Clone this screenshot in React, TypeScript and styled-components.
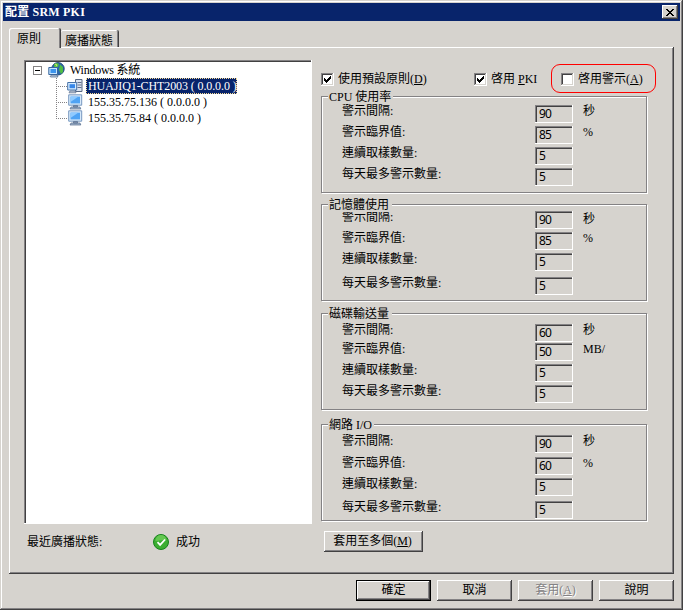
import React from "react";
import styled, { createGlobalStyle, css } from "styled-components";

const FACE = "#d6d3ce";

const Global = createGlobalStyle`
  * { box-sizing: border-box; }
  body { margin: 0; background: ${FACE}; }
`;

const raised = css`
  box-shadow: inset -1px -1px #424142, inset 1px 1px #fff, inset -2px -2px #848284;
`;
const sunken = css`
  box-shadow: inset -1px -1px #fff, inset 1px 1px #848284, inset 2px 2px #424142;
`;

const Dialog = styled.main`
  width: 683px;
  height: 610px;
  padding: 3px 2px 2px 3px;
  display: flex;
  flex-direction: column;
  background: ${FACE};
  color: #000;
  font: 12px/12px "Liberation Serif", "Noto Sans CJK TC", serif;
  white-space: nowrap;
  overflow: hidden;
  box-shadow: inset -1px -1px #424142, inset 1px 1px ${FACE}, inset -2px -2px #848284, inset 2px 2px #fff;
`;

const TitleBar = styled.header`
  display: flex;
  align-items: center;
  justify-content: space-between;
  width: 677px;
  height: 18px;
  padding: 0 2px;
  background: #08246b;
  color: #fff;
  font-weight: bold;
`;

const CloseButton = styled.button`
  width: 16px;
  height: 14px;
  padding: 0;
  border: 0;
  display: grid;
  place-items: center;
  background: ${FACE};
  ${raised}
`;

const Text = styled.span<{ $spacing?: number; $w?: number }>`
  letter-spacing: ${(p) => p.$spacing ?? 0}px;
  ${(p) => p.$w && `width: ${p.$w}px;`}
`;

const TabStrip = styled.nav`
  display: flex;
  align-items: flex-end;
  height: 19px;
  margin: 7px 0 0 6px;
`;

const Tab = styled.div<{ $active?: boolean; $w: number }>`
  width: ${(p) => p.$w}px;
  height: ${(p) => (p.$active ? 20 : 17)}px;
  margin-bottom: ${(p) => (p.$active ? -1 : 0)}px;
  padding: ${(p) => (p.$active ? "5px 0 0 8px" : "5px 0 0 4px")};
  border-radius: 2px 2px 0 0;
  background: ${FACE};
  position: relative;
  z-index: ${(p) => (p.$active ? 1 : 0)};
  box-shadow: inset -1px 0 #424142, inset ${(p) => (p.$active ? 1 : 0)}px 1px #fff, inset -2px 0 #848284;
`;

const Panel = styled.section`
  display: grid;
  grid-template-columns: 288px 327px;
  column-gap: 9px;
  width: 665px;
  height: 527px;
  margin-left: 6px;
  padding: 13px 0 0 15px;
  align-content: start;
  ${raised}
`;

const Column = styled.div`
  display: flex;
  flex-direction: column;
`;

const Tree = styled.div`
  height: 464px;
  padding: 2px;
  background: #fff;
  ${sunken}
`;

const TreeRow = styled.div<{ $child?: boolean }>`
  display: flex;
  align-items: center;
  height: 16px;
  padding-left: ${(p) => (p.$child ? 30 : 7)}px;
`;

const NodeLabel = styled.span<{ $selected?: boolean; $spacing?: number }>`
  height: 16px;
  line-height: 16px;
  padding: 0 2px;
  margin-left: 3px;
  letter-spacing: ${(p) => p.$spacing ?? 0}px;
  ${(p) =>
    p.$selected &&
    css`
      width: 151px;
      color: #fff;
      background: #08246b;
      outline: 1px dotted #f7db94;
      outline-offset: -1px;
    `}
`;

const Status = styled.div`
  display: flex;
  align-items: center;
  height: 16px;
  margin: 10px 0 0 3px;
`;

const StatusValue = styled.span`
  margin-left: 7px;
`;

const Options = styled.div`
  display: flex;
  align-items: center;
  height: 29px;
  margin-top: 4px;
`;

const Check = styled.label<{ $w?: number; $ringed?: boolean }>`
  flex: none;
  display: flex;
  align-items: center;
  gap: 4px;
  width: ${(p) => p.$w}px;
  height: 29px;
  ${(p) =>
    p.$ringed &&
    css`
      padding-left: 9px;
      border: 1px solid #f00;
      border-radius: 9px;
    `}
`;

const Box = styled.span`
  flex: none;
  display: grid;
  place-items: center;
  width: 13px;
  height: 13px;
  margin-top: 2px;
  background: #fff;
  box-shadow: inset -1px -1px #fff, inset 1px 1px #848284, inset -2px -2px ${FACE}, inset 2px 2px #424142;
`;

const Group = styled.section<{ $gap: number }>`
  width: 326px;
  height: 97px;
  margin: ${(p) => p.$gap}px 0 1px;
  padding-left: 8px;
  border: 1px solid #848284;
  box-shadow: 1px 1px #fff, inset 1px 1px #fff;
`;

const Legend = styled.h2<{ $w: number }>`
  position: relative;
  z-index: 1;
  width: ${(p) => p.$w}px;
  height: 13px;
  margin: -6px 0 0 -2px;
  padding-left: 1px;
  background: ${FACE};
  font: inherit;
  line-height: 13px;
`;

const Row = styled.div<{ $gap: number }>`
  display: grid;
  grid-template-columns: 193px 38px 40px;
  height: 18px;
  margin: ${(p) => p.$gap}px 0 0 12px;
`;

const Field = styled.span`
  height: 18px;
  padding: 3px 0 0 4px;
  font: 12px/12px "Noto Sans", sans-serif;
  letter-spacing: -0.9px;
  ${sunken}
`;

const Unit = styled.span<{ $drop?: number }>`
  padding: ${(p) => p.$drop ?? 0}px 0 0 10px;
`;

const Button = styled.button<{ $w: number; $primary?: boolean; $disabled?: boolean }>`
  width: ${(p) => p.$w}px;
  height: 21px;
  padding: 0 0 1px;
  border: 0;
  background: ${FACE};
  color: ${(p) => (p.$disabled ? "#848284" : "#000")};
  text-shadow: ${(p) => (p.$disabled ? "1px 1px #fff" : "none")};
  font: inherit;
  ${raised}
  ${(p) =>
    p.$primary &&
    css`
      box-shadow: inset 0 0 0 1px #000, inset -2px -2px #424142, inset 2px 2px #fff, inset -3px -3px #848284;
    `}
`;

const ApplyMany = styled(Button)`
  margin: 9px 0 0 3px;
  padding-right: 2px;
`;

const Footer = styled.footer`
  display: flex;
  justify-content: flex-end;
  gap: 6px;
  margin: 6px 7px 0 0;
`;

const Tick = () => (
  <svg width="7" height="7" viewBox="0 0 7 7" shapeRendering="crispEdges">
    <path d="M0 2h1v1h1v1h1v-1h1v-1h1v-1h1v-1h1v3h-1v1h-1v1h-1v1h-1v1h-1v-1h-1v-1h-1z" />
  </svg>
);

const Expander = () => (
  <svg width="15" height="16" shapeRendering="crispEdges">
    <path d="M.5 4.5h8v8h-8z" fill="#fff" stroke="#848284" />
    <path d="M2 8.5h5" stroke="#000" />
  </svg>
);

const Branch = ({ last }: { last?: boolean }) => (
  <svg width="11" height="16" shapeRendering="crispEdges">
    <path d={`M.5 0v${last ? 8 : 16}M0 8.5h11`} fill="none" stroke="#848284" strokeDasharray="1 1" />
  </svg>
);

const Globe = () => (
  <svg width="17" height="16" viewBox="0 0 17 16">
    <circle cx="10" cy="6.8" r="6.2" fill="#2a67ad" stroke="#1f4b78" />
    <path d="M6 2l3-1 2 1-1 3-4 1zM12 2.500l3 2.500v5l-2 2-2-4z" fill="#4fbd45" />
    <path d="M7 2l2 1-1 1.500" fill="none" stroke="#d7ec6b" />
    <path d="M.8 5.500h8.700v7H.8z" fill="#c4e4ff" stroke="#36659f" />
    <path d="M2.500 7h5.500v4H2.500z" fill="#3c94ec" />
    <path d="M2 14.500l1.500-1.500h5.500l1 2H3z" fill="#c3cfdf" stroke="#405b82" strokeWidth=".7" />
  </svg>
);

const Host = () => (
  <svg width="16" height="16" viewBox="0 0 16 16">
    <path d="M8.500 1.500h6.500v12H8.500z" fill="#dbe3ef" stroke="#596984" />
    <path d="M10.500 4.500h4M10.500 7h4M10.500 9.500h4" stroke="#62708b" />
    <path d="M.7 4.500h9v7.500h-9z" fill="#d4ebff" stroke="#4772a8" />
    <path d="M2.500 6.200h5.500v4H2.500z" fill="#3686e8" />
    <path d="M3 13h5l1 1.800H2z" fill="#c3cfdf" stroke="#566987" strokeWidth=".7" />
  </svg>
);

const Monitor = () => (
  <svg width="16" height="16" viewBox="0 0 16 16">
    <path d="M1.700 .8h13v10.400h-13z" fill="#d7e9fa" stroke="#7898bf" />
    <path d="M3.500 2.600h9.500v6.800H3.500z" fill="#4fa3f4" />
    <path d="M3.500 2.600h8l-8 5.400z" fill="#8fcaff" />
    <path d="M6.500 11.500h4v1.500h-4zM4 13h9l.8 2H3z" fill="#a6b8ce" stroke="#52688a" strokeWidth=".7" />
  </svg>
);

const Success = () => (
  <svg width="16" height="16" viewBox="0 0 16 16">
    <circle cx="8" cy="8" r="7.500" fill="#3cae32" stroke="#16831b" />
    <path d="M2.500 7a5.500 5.500 0 0 1 11-1q-5 0-11 1z" fill="#65c852" />
    <path d="M4.500 8.200l2.600 2.700 5-5.400" fill="none" stroke="#fff" strokeWidth="1.800" />
  </svg>
);

const LABELS = ["警示間隔:", "警示臨界值:", "連續取樣數量:", "每天最多警示數量:"];

type GroupData = {
  title: string;
  width: number;
  gap: number;
  values: string[];
  gaps: number[];
  units: string[];
  unitDrop?: number;
};

const GROUPS: GroupData[] = [
  { title: "CPU 使用率", width: 65, gap: 3, values: ["90", "85", "5", "5"], gaps: [1, 3, 3, 3], units: ["秒", "%"] },
  { title: "記憶體使用", width: 64, gap: 10, values: ["90", "85", "5", "5"], gaps: [-1, 3, 3, 6], units: ["秒", "%"], unitDrop: 2 },
  { title: "磁碟輸送量", width: 64, gap: 11, values: ["60", "50", "5", "5"], gaps: [3, 1, 3, 3], units: ["秒", "MB/"] },
  { title: "網路 I/O", width: 46, gap: 13, values: ["90", "60", "5", "5"], gaps: [3, 4, 3, 5], units: ["秒", "%"] },
];

export default function App() {
  return (
    <Dialog>
      <Global />
      <TitleBar>
        <Text $spacing={0.2}>配置 SRM PKI</Text>
        <CloseButton aria-label="關閉">
          <svg width="8" height="7" viewBox="0 0 8 7" shapeRendering="crispEdges">
            <path d="M0 0h2v1h1v1h2v-1h1v-1h2v1h-1v1h-1v1h-1v1h1v1h1v1h1v1h-2v-1h-1v-1h-2v1h-1v1h-2v-1h1v-1h1v-1h1v-1h-1v-1h-1v-1h-1z" />
          </svg>
        </CloseButton>
      </TitleBar>
      <TabStrip>
        <Tab $active $w={52}>原則</Tab>
        <Tab $w={58}>廣播狀態</Tab>
      </TabStrip>
      <Panel>
        <Column>
          <Tree>
            <TreeRow>
              <Expander />
              <Globe />
              <NodeLabel $spacing={-0.25}>Windows 系統</NodeLabel>
            </TreeRow>
            <TreeRow $child>
              <Branch />
              <Host />
              <NodeLabel $selected $spacing={-0.1}>HUAJIQ1-CHT2003 ( 0.0.0.0 )</NodeLabel>
            </TreeRow>
            <TreeRow $child>
              <Branch />
              <Monitor />
              <NodeLabel>155.35.75.136 ( 0.0.0.0 )</NodeLabel>
            </TreeRow>
            <TreeRow $child>
              <Branch last />
              <Monitor />
              <NodeLabel>155.35.75.84 ( 0.0.0.0 )</NodeLabel>
            </TreeRow>
          </Tree>
          <Status>
            <Text $w={126}>最近廣播狀態:</Text>
            <Success />
            <StatusValue>成功</StatusValue>
          </Status>
        </Column>
        <Column>
          <Options>
            <Check $w={153}>
              <Box><Tick /></Box>
              <Text>使用預設原則(<u>D</u>)</Text>
            </Check>
            <Check $w={77}>
              <Box><Tick /></Box>
              <Text>啓用 <u>P</u>KI</Text>
            </Check>
            <Check $w={105} $ringed>
              <Box />
              <Text>啓用警示(<u>A</u>)</Text>
            </Check>
          </Options>
          {GROUPS.map((group) => (
            <Group key={group.title} $gap={group.gap}>
              <Legend $w={group.width}>{group.title}</Legend>
              {LABELS.map((label, i) => (
                <Row key={label} $gap={group.gaps[i]}>
                  <Text>{label}</Text>
                  <Field>{group.values[i]}</Field>
                  <Unit $drop={i === 0 ? group.unitDrop : 0}>{group.units[i]}</Unit>
                </Row>
              ))}
            </Group>
          ))}
          <ApplyMany $w={99}>套用至多個(<u>M</u>)</ApplyMany>
        </Column>
      </Panel>
      <Footer>
        <Button $w={75} $primary>確定</Button>
        <Button $w={75}>取消</Button>
        <Button $w={75} $disabled>套用(<u>A</u>)</Button>
        <Button $w={75}>說明</Button>
      </Footer>
    </Dialog>
  );
}
